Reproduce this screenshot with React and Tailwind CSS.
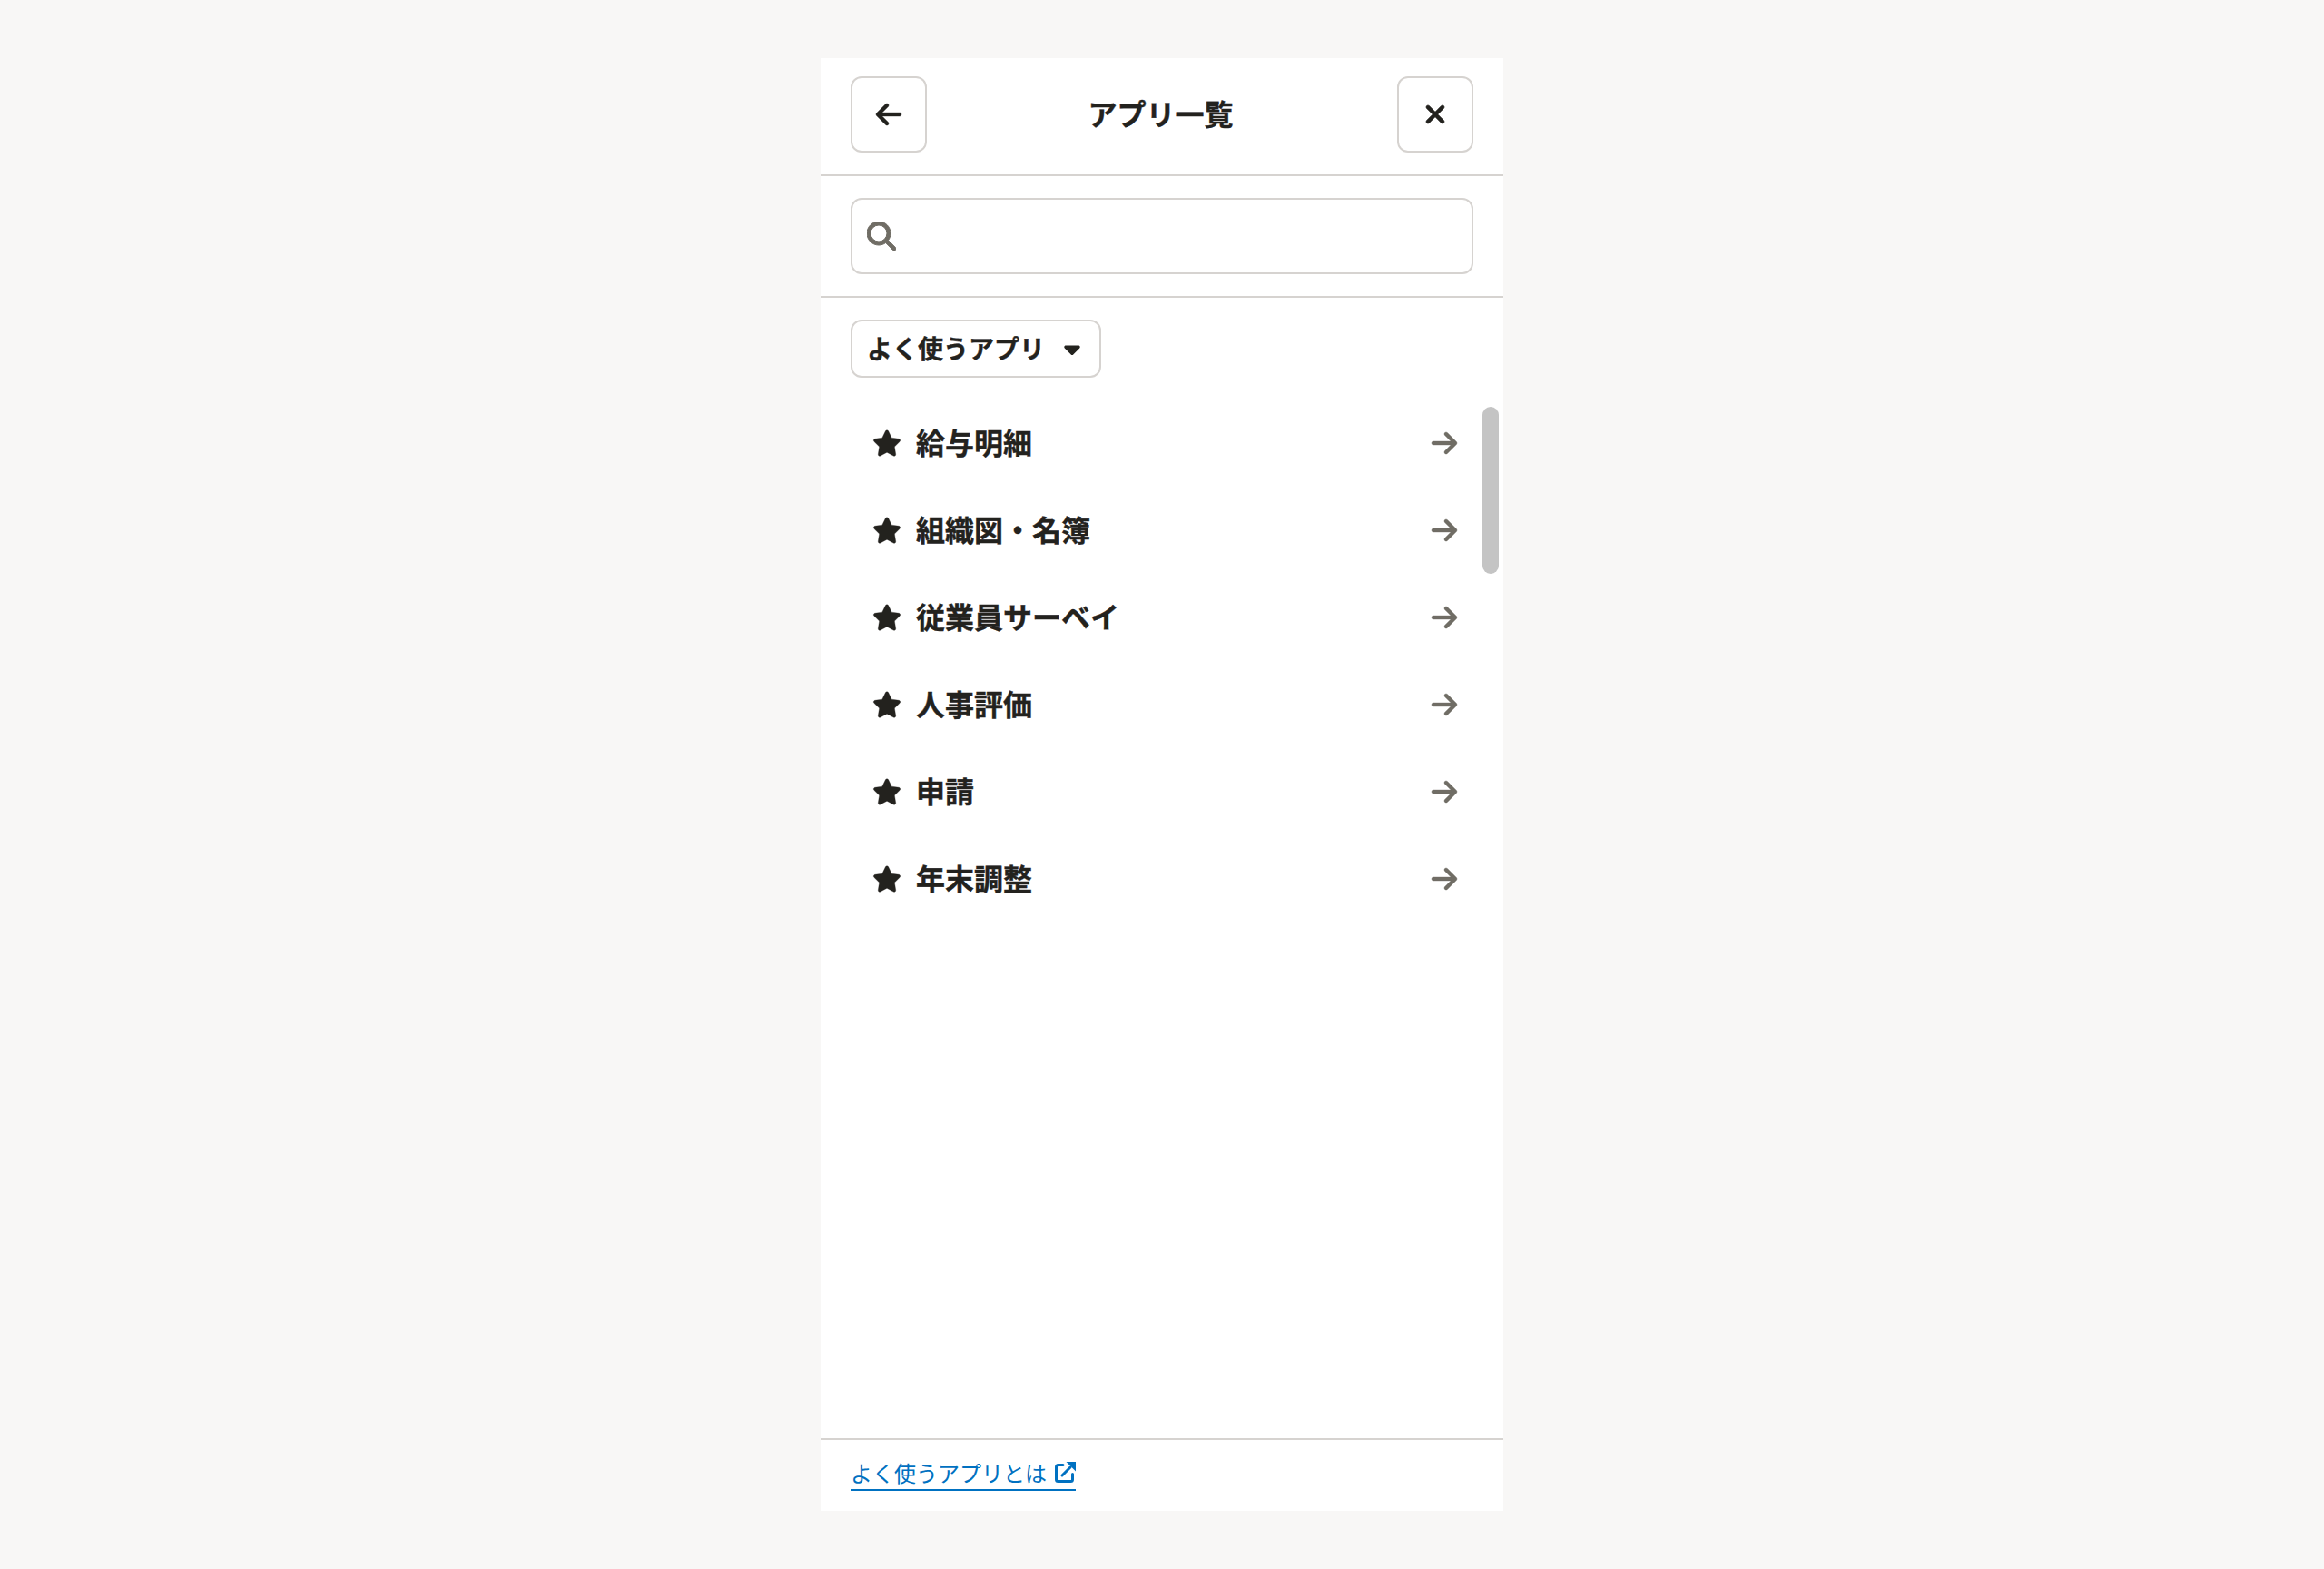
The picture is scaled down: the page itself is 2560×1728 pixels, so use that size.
import React from "react";
import {
  FaArrowLeft,
  FaArrowRight,
  FaCaretDown,
  FaMagnifyingGlass,
  FaStar,
  FaXmark,
} from "react-icons/fa6";

const apps = ["給与明細", "組織図・名簿", "従業員サーベイ", "人事評価", "申請", "年末調整"];

const IconButton = ({ children }) => (
  <button className="w-[84px] h-[84px] flex items-center justify-center bg-white border-2 border-[#d6d3d0] rounded-[12px] text-[#23221e]">
    {children}
  </button>
);

const ExternalLinkIcon = () => (
  <svg width="24" height="24" viewBox="0 0 24 24" className="-mt-[1px]">
    <path
      d="M10 3.5H4.5a2 2 0 0 0-2 2v14a2 2 0 0 0 2 2h14a2 2 0 0 0 2-2v-6"
      fill="none"
      stroke="currentColor"
      strokeWidth="3"
      strokeLinecap="round"
    />
    <path d="M9 15L18 6" fill="none" stroke="currentColor" strokeWidth="3" strokeLinecap="round" />
    <path d="M13.5 0H24V10.5Z" fill="currentColor" />
  </svg>
);

export default function App() {
  return (
    <div className="min-h-[1728px] bg-[#f8f7f6] py-16 font-['Noto_Sans_CJK_JP','Noto_Sans',sans-serif] text-[#23221e]">
      <div className="relative mx-auto w-[752px] h-[1600px] bg-white flex flex-col">
        <header className="h-[130px] flex items-center justify-between px-[33px] border-b-2 border-[#d6d3d0] pb-[4px]">
          <IconButton>
            <FaArrowLeft size={32} stroke="currentColor" strokeWidth={6} />
          </IconButton>
          <h1 className="pb-[4px] pr-[3px] text-[32px] font-bold leading-none [-webkit-text-stroke:0.4px_#23221e]">アプリ一覧</h1>
          <IconButton>
            <FaXmark size={32} stroke="currentColor" strokeWidth={10} />
          </IconButton>
        </header>

        <div className="h-[134px] flex items-center px-[33px] border-b-2 border-[#d6d3d0]">
          <div className="w-full h-[84px] flex items-center pl-[16px] border-2 border-[#d6d3d0] rounded-[12px] text-[#706d65]">
            <FaMagnifyingGlass size={32} stroke="currentColor" strokeWidth={16} />
          </div>
        </div>

        <div className="flex-1 px-[33px] pt-[24px]">
          <button className="h-[64px] w-[276px] flex items-center justify-between pl-[16px] pr-[16px] border-2 border-[#d6d3d0] rounded-[12px] text-[28px] font-bold leading-none">
            <span className="pb-[2px] [-webkit-text-stroke:0.4px_#23221e]">よく使うアプリ</span>
            <FaCaretDown size={28} />
          </button>

          <ul className="mt-[24px]">
            {apps.map((name) => (
              <li key={name} className="h-[96px] flex items-center pl-[24px] pr-[16px]">
                <FaStar size={32} stroke="currentColor" strokeWidth={6} />
                <span className="ml-[16px] pb-[4px] flex-1 text-[32px] font-bold leading-none [-webkit-text-stroke:0.4px_#23221e]">{name}</span>
                <FaArrowRight size={32} className="text-[#706d65]" stroke="currentColor" strokeWidth={6} />
              </li>
            ))}
          </ul>
        </div>

        <div className="absolute right-[5px] top-[384px] w-[18px] h-[184px] rounded-full bg-[#c4c4c4]" />

        <footer className="h-[80px] flex items-center px-[33px] border-t-2 border-[#d6d3d0] pb-[4px]">
          <a className="flex items-center gap-[8px] text-[24px] leading-[36px] text-[#0071c1] border-b-2 border-[#0071c1]">
            よく使うアプリとは
            <ExternalLinkIcon />
          </a>
        </footer>
      </div>
    </div>
  );
}
